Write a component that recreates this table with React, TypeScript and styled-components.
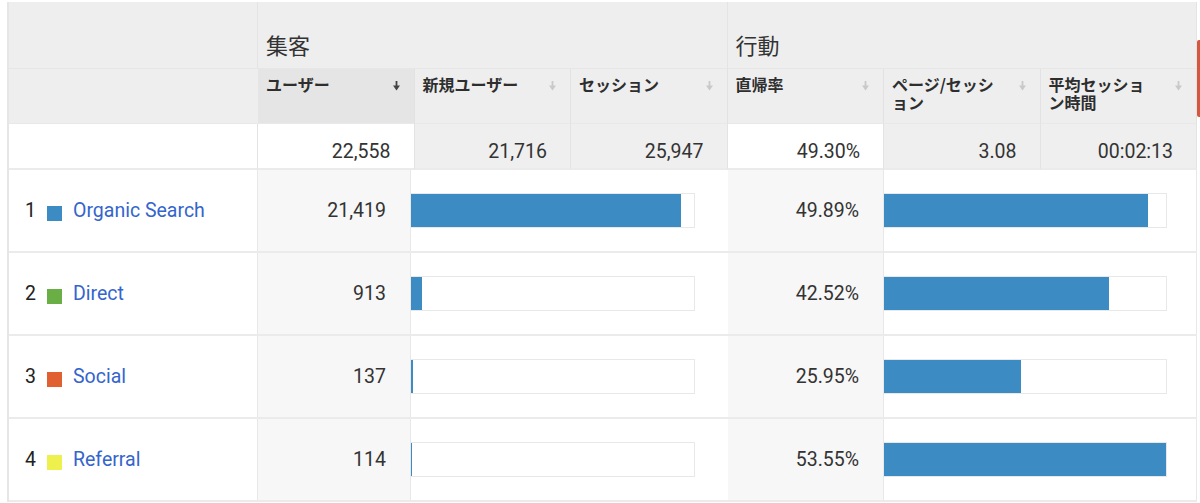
import React from 'react';
import styled, { createGlobalStyle } from 'styled-components';

const GlobalStyle = createGlobalStyle`
  html, body { margin: 0; padding: 0; background: #ffffff; }
  body { font-family: Roboto, "Noto Sans CJK JP", sans-serif; }
  * { box-sizing: border-box; }
`;

const Page = styled.div`
  display: flex;
  align-items: flex-start;
  width: 1200px;
  padding: 2px 0 0 7px;
`;

const Table = styled.div`
  width: 1190px;
  border-left: 2px solid #e6e6e6;
`;

const Edge = styled.div`
  width: 3px;
  height: 77px;
  margin-top: 38px;
  background: #d5573f;
  border-radius: 2px 0 0 2px;
`;

const HeadGrid = styled.div`
  display: grid;
  grid-template-columns: 249px repeat(6, 1fr);
  grid-template-rows: 67px 55px 46px;
`;

const GroupCell = styled.div<{ $span?: number }>`
  grid-column: span ${(p) => p.$span ?? 1};
  background: #eeeeee;
  border-right: 1px solid #e4e4e4;
  border-bottom: 1px solid #e6e6e6;
  padding: 0 8px 13px;
  display: flex;
  align-items: flex-end;
  font-family: "Noto Sans CJK JP", sans-serif;
  font-size: 22px;
  line-height: 22px;
  color: #333333;
`;

const HeadCell = styled.div<{ $sorted?: boolean; $blank?: boolean }>`
  background: ${(p) => (p.$sorted ? '#e5e5e5' : '#eeeeee')};
  border-right: 1px solid ${(p) => (p.$blank ? '#eeeeee' : '#e2e2e2')};
  border-bottom: 1px solid #e8e8e8;
  padding: 6px 13px 0 8px;
  display: flex;
  justify-content: space-between;
  align-items: flex-start;
  font-family: "Noto Sans CJK JP", sans-serif;
  font-weight: 700;
  font-size: 16px;
  line-height: 18px;
  color: #2e2e2e;
`;

const HeadLabel = styled.span`
  white-space: nowrap;
`;

const ArrowWrap = styled.span`
  display: flex;
  margin-top: 6px;
`;

const TotalCell = styled.div<{ $shade?: boolean }>`
  background: ${(p) => (p.$shade ? '#efefef' : '#ffffff')};
  border-right: 1px solid #e3e3e3;
  border-bottom: 2px solid #ebebeb;
  display: flex;
  justify-content: flex-end;
  align-items: flex-end;
  padding: 0 23px 4px 0;
  font-size: 19.5px;
  line-height: 24px;
  color: #333333;
`;

const DataRow = styled.div`
  display: grid;
  grid-template-columns: 249px 153px 317px 156px 313px;
  height: 83px;
  border-bottom: 2px solid #ebebeb;
`;

const LabelCell = styled.div`
  display: flex;
  align-items: center;
  padding-left: 16px;
  border-right: 1px solid #e8e8e8;
  font-size: 19.5px;
  line-height: 24px;
`;

const Index = styled.span`
  color: #222222;
  width: 22px;
`;

const Swatch = styled.span<{ $color: string }>`
  width: 15px;
  height: 15px;
  margin: 6px 11px 0 0;
  background: ${(p) => p.$color};
`;

const SourceLink = styled.a`
  color: #3465cc;
  text-decoration: none;
`;

const ValueCell = styled.div`
  display: flex;
  align-items: center;
  justify-content: flex-end;
  padding-right: 24px;
  background: #f7f7f7;
  border-right: 1px solid #e8e8e8;
  font-size: 19.5px;
  line-height: 24px;
  color: #333333;
`;

const BarCell = styled.div<{ $last?: boolean }>`
  display: flex;
  align-items: center;
  background: #ffffff;
  border-right: ${(p) => (p.$last ? '1px solid #e8e8e8' : '0')};
`;

const Track = styled.div<{ $width: number }>`
  width: ${(p) => p.$width}px;
  height: 35px;
  border: 1px solid #e8e8e8;
  border-left: 0;
  display: flex;
`;

const Fill = styled.div`
  height: 33px;
  background: #3c8bc3;
`;

const SortArrow: React.FC<{ active?: boolean }> = ({ active }) => (
  <svg width="9" height="10" viewBox="0 0 9 10">
    <rect x="3.6" y="0" width="1.8" height="5.5" fill={active ? '#444444' : '#c9c9c9'} />
    <polygon points="1,4.6 8,4.6 4.5,9.6" fill={active ? '#444444' : '#c9c9c9'} />
  </svg>
);

const headers: { label: React.ReactNode; sorted?: boolean }[] = [
  { label: 'ユーザー', sorted: true },
  { label: '新規ユーザー' },
  { label: 'セッション' },
  { label: '直帰率' },
  { label: <>ページ/セッシ<br />ョン</> },
  { label: <>平均セッショ<br />ン時間</> },
];

const totals = [
  { v: '22,558', shade: false },
  { v: '21,716', shade: true },
  { v: '25,947', shade: true },
  { v: '49.30%', shade: false },
  { v: '3.08', shade: true },
  { v: '00:02:13', shade: true },
];

const rows = [
  { name: 'Organic Search', color: '#3c8bc3', users: 21419, bounce: 49.89 },
  { name: 'Direct', color: '#6aaf46', users: 913, bounce: 42.52 },
  { name: 'Social', color: '#e06032', users: 137, bounce: 25.95 },
  { name: 'Referral', color: '#eef04e', users: 114, bounce: 53.55 },
];

const TOTAL_USERS = 22558;
const MAX_BOUNCE = 53.55;

export default function App() {
  return (
    <>
      <GlobalStyle />
      <Page>
        <Table>
          <HeadGrid>
            <GroupCell />
            <GroupCell $span={3}>集客</GroupCell>
            <GroupCell $span={3}>行動</GroupCell>
            <HeadCell $blank />
            {headers.map((h, i) => (
              <HeadCell key={i} $sorted={h.sorted}>
                <HeadLabel>{h.label}</HeadLabel>
                <ArrowWrap>
                  <SortArrow active={h.sorted} />
                </ArrowWrap>
              </HeadCell>
            ))}
            <TotalCell />
            {totals.map((t, i) => (
              <TotalCell key={i} $shade={t.shade}>
                {t.v}
              </TotalCell>
            ))}
          </HeadGrid>
          {rows.map((r, i) => (
            <DataRow key={r.name}>
              <LabelCell>
                <Index>{i + 1}</Index>
                <Swatch $color={r.color} />
                <SourceLink href="#">{r.name}</SourceLink>
              </LabelCell>
              <ValueCell>{r.users.toLocaleString('en-US')}</ValueCell>
              <BarCell>
                <Track $width={284}>
                  <Fill style={{ width: `${(r.users / TOTAL_USERS) * 284}px` }} />
                </Track>
              </BarCell>
              <ValueCell>{r.bounce.toFixed(2)}%</ValueCell>
              <BarCell $last>
                <Track $width={283}>
                  <Fill style={{ width: `${(r.bounce / MAX_BOUNCE) * 283}px` }} />
                </Track>
              </BarCell>
            </DataRow>
          ))}
        </Table>
        <Edge />
      </Page>
    </>
  );
}
